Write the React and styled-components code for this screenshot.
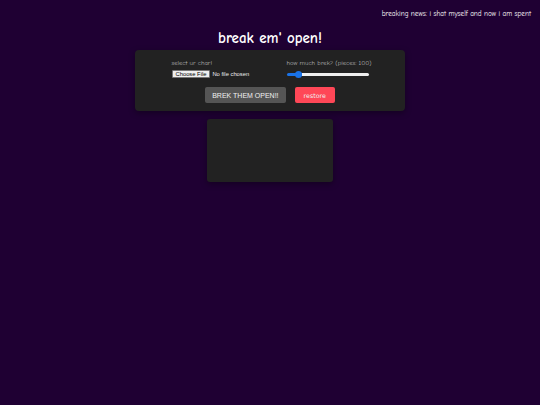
import styled, { createGlobalStyle } from "styled-components";

const GlobalStyle = createGlobalStyle`
  html, body {
    margin: 0;
    padding: 0;
    background-color: #1f0033;
  }
  body {
    font-family: "Comic Sans MS", "Comic Neue", "DejaVu Sans", cursive;
    color: #fff;
  }
`;

const Page = styled.div`
  min-height: 405px;
  display: flex;
  flex-direction: column;
  align-items: center;
`;

const NewsBar = styled.div`
  align-self: stretch;
  text-align: right;
  padding: 10px 9px 0 0;
  font-size: 7.2px;
  line-height: 9px;
  color: #fff;
`;

const Title = styled.h1`
  margin: 9px 0 2px;
  font-size: 15px;
  line-height: 20px;
  font-weight: bold;
  color: #fff;
`;

const Panel = styled.div`
  width: 270px;
  box-sizing: border-box;
  padding: 8px 0 8px;
  background-color: #222;
  border-radius: 4px;
  box-shadow: 0 2px 6px rgba(0, 0, 0, 0.35);
  display: flex;
  flex-direction: column;
  align-items: center;
  gap: 9px;
`;

const Controls = styled.div`
  display: flex;
  justify-content: center;
  gap: 35px;
`;

const Field = styled.div`
  width: ${(p) => p.$width}px;
  display: flex;
  flex-direction: column;
  gap: 3px;
`;

const Label = styled.label`
  font-size: 6.6px;
  line-height: 8px;
  margin-top: 1px;
  color: #b4b4b4;
  white-space: nowrap;
`;

const FileRow = styled.div`
  display: flex;
  align-items: center;
  gap: 2px;
  height: 8px;
  font-family: "Liberation Sans", Arial, sans-serif;
  font-size: 5.8px;
  color: #eee;
`;

const FileButton = styled.button`
  height: 8px;
  padding: 0 3px;
  border: 1px solid #767676;
  border-radius: 1px;
  background-color: #efefef;
  color: #000;
  font-family: inherit;
  font-size: 5.8px;
  line-height: 6px;
`;

const Slider = styled.input`
  -webkit-appearance: none;
  appearance: none;
  width: 82px;
  height: 3px;
  margin: 2.5px 0;
  border-radius: 2px;
  background: linear-gradient(
    to right,
    #1a73e8 0%,
    #1a73e8 ${(p) => p.$fill}%,
    #efefef ${(p) => p.$fill}%,
    #efefef 100%
  );
  outline: none;

  &::-webkit-slider-thumb {
    -webkit-appearance: none;
    width: 7px;
    height: 7px;
    border-radius: 50%;
    background: #1a73e8;
    border: none;
  }
`;

const Actions = styled.div`
  display: flex;
  gap: 9px;
`;

const Button = styled.button`
  height: 16px;
  padding: 0 ${(p) => (p.$danger ? 9 : 7)}px;
  border: none;
  border-radius: 2px;
  background-color: ${(p) => (p.$danger ? "#ff4757" : "#555")};
  color: #f0f0f0;
  font-family: ${(p) =>
    p.$danger ? `"Comic Sans MS", "DejaVu Sans", cursive` : `"Liberation Sans", Arial, sans-serif`};
  font-weight: normal;
  font-size: ${(p) => (p.$danger ? 6.3 : 7)}px;
  cursor: pointer;
`;

const Stage = styled.div`
  margin-top: 8px;
  width: 126px;
  height: 63px;
  background-color: #222;
  border-radius: 3px;
  box-shadow: 0 2px 6px rgba(0, 0, 0, 0.35);
`;

const pieces = 100;

export default function App() {
  return (
    <>
      <GlobalStyle />
      <Page>
        <NewsBar>breaking news: i shat myself and now i am spent</NewsBar>
        <Title>break em' open!</Title>
        <Panel>
          <Controls>
            <Field $width={80}>
              <Label>select ur char!</Label>
              <FileRow>
                <FileButton>Choose File</FileButton>
                <span>No file chosen</span>
              </FileRow>
            </Field>
            <Field $width={82}>
              <Label>how much brek? (pieces: {pieces})</Label>
              <Slider type="range" min={50} max={500} defaultValue={pieces} $fill={18} />
            </Field>
          </Controls>
          <Actions>
            <Button>BREK THEM OPEN!!</Button>
            <Button $danger>restore</Button>
          </Actions>
        </Panel>
        <Stage />
      </Page>
    </>
  );
}
